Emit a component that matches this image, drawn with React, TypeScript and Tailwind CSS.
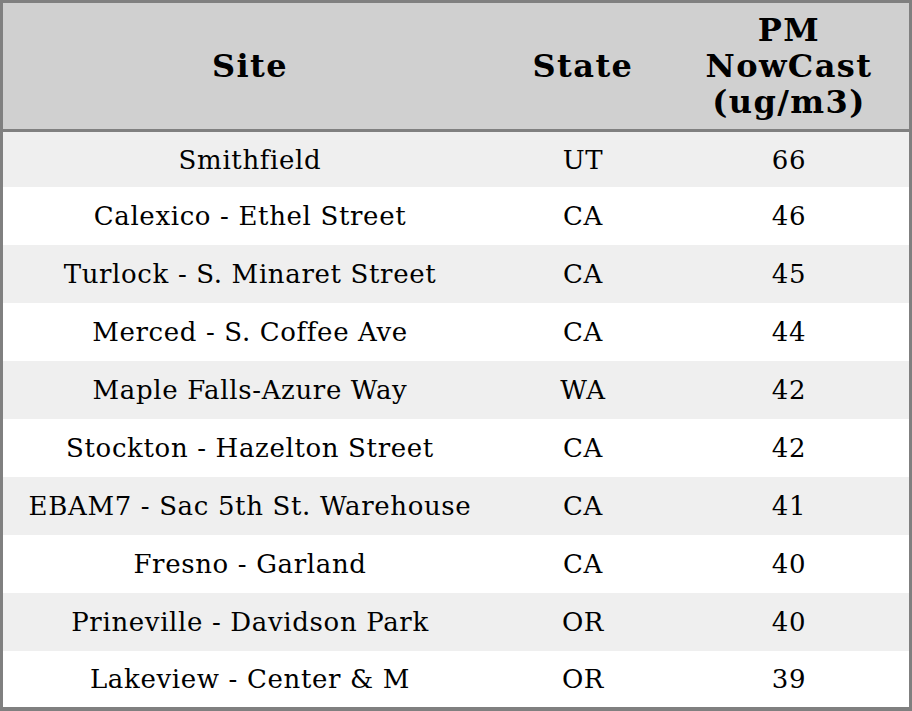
import React from 'react';

const rows: [string, string, number][] = [
    ['Smithfield', 'UT', 66],
    ['Calexico - Ethel Street', 'CA', 46],
    ['Turlock - S. Minaret Street', 'CA', 45],
    ['Merced - S. Coffee Ave', 'CA', 44],
    ['Maple Falls-Azure Way', 'WA', 42],
    ['Stockton - Hazelton Street', 'CA', 42],
    ['EBAM7 - Sac 5th St. Warehouse', 'CA', 41],
    ['Fresno - Garland', 'CA', 40],
    ['Prineville - Davidson Park', 'OR', 40],
    ['Lakeview - Center & M', 'OR', 39],
];

export default function App() {
    return (
        <div className="w-[912px] h-[711px] bg-white font-['DejaVu_Serif',serif] text-black">
            <div className="flex flex-col border-[3px] border-b-4 border-[#808080] h-[711px]">
                {/* header */}
                <div className="grid grid-cols-[494px_172px_1fr] h-[129px] bg-[#d0d0d0] border-b-[3px] border-[#808080] font-bold text-[32px] leading-[36px] tracking-[1.4px] items-center text-center shrink-0">
                    <div>Site</div>
                    <div>State</div>
                    <div>PM<br />NowCast<br />(ug/m3)</div>
                </div>
                <div className="flex flex-col flex-1">
                    {rows.map(([site, state, value], i) => (
                        <div
                            key={i}
                            className={`grid grid-cols-[494px_172px_1fr] items-center text-center text-[26px] tracking-[0.65px] ${i === 0 ? 'h-[55px] pt-[1px]' : 'h-[58px]'} ${i === rows.length - 1 ? 'flex-1' : ''} ${i % 2 === 0 ? 'bg-[#efefef]' : 'bg-white'}`}
                        >
                            <div>{site}</div>
                            <div>{state}</div>
                            <div>{value}</div>
                        </div>
                    ))}
                </div>
            </div>
        </div>
    );
}
